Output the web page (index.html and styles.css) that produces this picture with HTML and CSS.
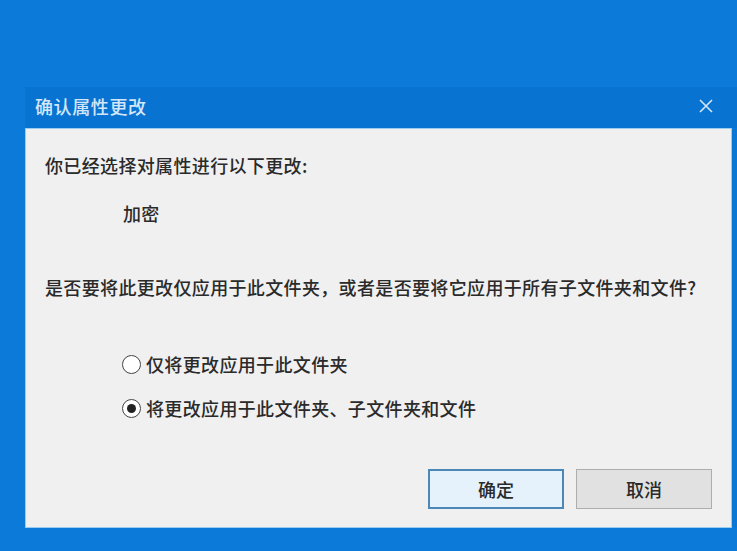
FILE: index.html
```html
<!DOCTYPE html>
<html lang="zh-CN">
<head>
<meta charset="utf-8">
<title>确认属性更改</title>
<link rel="stylesheet" href="styles.css">
</head>
<body>
<div class="desktop">
  <div class="dialog">
    <div class="titlebar">
      <span class="title">确认属性更改</span>
      <svg class="close" width="14" height="14" viewBox="0 0 14 14" aria-hidden="true">
        <path d="M1 1 L13 13 M13 1 L1 13" stroke="currentColor" stroke-width="1.6" fill="none"/>
      </svg>
    </div>
    <div class="panel">
      <p class="text line1">你已经选择对属性进行以下更改:</p>
      <p class="text item">加密</p>
      <p class="text question">是否要将此更改仅应用于此文件夹，或者是否要将它应用于所有子文件夹和文件?</p>
      <div class="options">
        <div class="radio"><span class="circle"></span><span class="text">仅将更改应用于此文件夹</span></div>
        <div class="radio"><span class="circle checked"></span><span class="text">将更改应用于此文件夹、子文件夹和文件</span></div>
      </div>
      <div class="buttons">
        <button class="btn primary">确定</button>
        <button class="btn">取消</button>
      </div>
    </div>
  </div>
</div>
</body>
</html>
```

FILE: styles.css
```css
html, body {
  margin: 0;
  padding: 0;
}
body {
  background: #0c7ad8;
  font-family: "Noto Sans CJK SC", "Noto Sans", sans-serif;
  overflow: hidden;
}
.desktop {
  height: 551px;
  box-sizing: border-box;
  padding-top: 87px;
  padding-left: 25px;
}
.dialog {
  width: 712px;
  display: flex;
  flex-direction: column;
  background: #0a77d6;
}
.titlebar {
  height: 41px;
  display: flex;
  align-items: center;
  padding-left: 10px;
  padding-bottom: 4px;
  box-sizing: border-box;
  background: #0973d2;
  color: #d4e7f9;
}
.title {
  font-size: 18px;
  font-weight: 500;
  letter-spacing: 0.6px;
  line-height: 24px;
}
.close {
  margin-left: auto;
  margin-right: 24px;
  color: #d4e7f9;
}
.panel {
  width: 707px;
  height: 400px;
  box-sizing: border-box;
  border: 1px solid #9ccbf0;
  background: #f0f0f0;
  padding: 24px 19px 0 19px;
  display: flex;
  flex-direction: column;
  align-items: flex-start;
}
.text {
  margin: 0;
  font-size: 18px;
  font-weight: 500;
  line-height: 24px;
  letter-spacing: 0.35px;
  color: #2a2a2a;
  white-space: nowrap;
}
.item {
  margin-top: 24px;
  margin-left: 78px;
}
.question {
  margin-top: 50px;
}
.options {
  margin-top: 53px;
  margin-left: 77px;
  display: flex;
  flex-direction: column;
  gap: 20px;
}
.radio {
  display: flex;
  align-items: center;
  gap: 5px;
  height: 24px;
}
.circle {
  width: 19px;
  height: 19px;
  box-sizing: border-box;
  border: 1.5px solid #444;
  border-radius: 50%;
  background: #fff;
  display: flex;
  align-items: center;
  justify-content: center;
}
.circle.checked::after {
  content: "";
  width: 9px;
  height: 9px;
  border-radius: 50%;
  background: #222;
}
.buttons {
  margin-top: 49px;
  align-self: flex-end;
  display: flex;
  gap: 12px;
}
.btn {
  width: 136px;
  height: 40px;
  box-sizing: border-box;
  border: 1px solid #adadad;
  background: #e1e1e1;
  font-family: "Noto Sans CJK SC", sans-serif;
  font-size: 18px;
  font-weight: 500;
  color: #2a2a2a;
  padding: 0;
}
.btn.primary {
  background: #e5f1fb;
  border: 2px solid #4b88b8;
}
```
